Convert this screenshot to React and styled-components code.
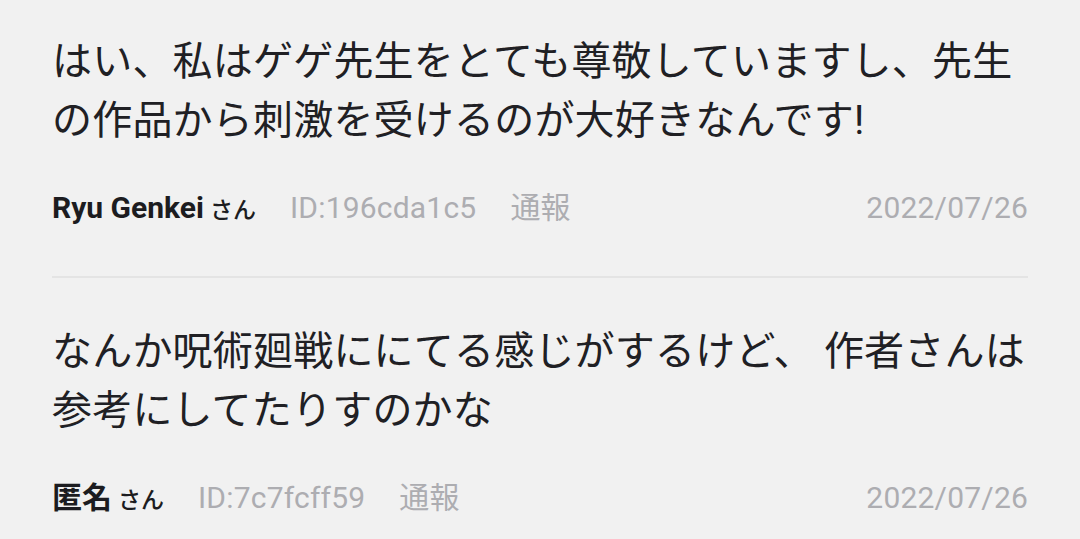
import React from "react";
import styled, { createGlobalStyle } from "styled-components";

const GlobalStyle = createGlobalStyle`
  html, body {
    margin: 0;
    padding: 0;
    background: #f1f1f1;
  }
  body {
    font-family: Roboto, "Noto Sans CJK JP", sans-serif;
    -webkit-font-smoothing: antialiased;
  }
`;

const Page = styled.div`
  width: 1080px;
  height: 539px;
  padding: 0 52px;
  box-sizing: border-box;
  background: #f1f1f1;
  overflow: hidden;
`;

// ========== コメント ==========

const CommentItem = styled.section`
  padding: 44px 0 50px;
  border-bottom: 2px solid #e4e4e4;

  &:first-child {
    padding-top: 32px;
  }
  &:last-child {
    border-bottom: 0;
    padding-bottom: 0;
  }
`;

const Body = styled.p`
  margin: 0;
  font-size: 40px;
  line-height: 59px;
  color: #202024;
  letter-spacing: 0.2px;
`;

const Meta = styled.div`
  display: flex;
  align-items: baseline;
  gap: 34px;
  margin-top: 40px;
  height: 36px;
  font-size: 30px;
  line-height: 36px;
  letter-spacing: 0.2px;
  color: #adadb1;
`;

const Author = styled.span`
  font-weight: 700;
  color: #1c1c20;
  letter-spacing: 0;
`;

const Honorific = styled.span`
  margin-left: 6px;
  font-size: 23px;
  font-weight: 500;
`;

const Report = styled.span`
  cursor: pointer;
`;

const DateText = styled.span`
  margin-left: auto;
`;

const comments = [
  {
    id: "196cda1c5",
    author: "Ryu Genkei",
    body: "はい、私はゲゲ先生をとても尊敬していますし、先生の作品から刺激を受けるのが大好きなんです!",
    date: "2022/07/26",
  },
  {
    id: "7c7fcff59",
    author: "匿名",
    body: "なんか呪術廻戦ににてる感じがするけど、 作者さんは参考にしてたりすのかな",
    date: "2022/07/26",
  },
];

function Comment({ data }) {
  return (
    <CommentItem>
      <Body>{data.body}</Body>
      <Meta>
        <Author>
          {data.author}
          <Honorific>さん</Honorific>
        </Author>
        <span>ID:{data.id}</span>
        <Report>通報</Report>
        <DateText>{data.date}</DateText>
      </Meta>
    </CommentItem>
  );
}

export default function App() {
  return (
    <>
      <GlobalStyle />
      <Page>
        {comments.map((c) => (
          <Comment key={c.id} data={c} />
        ))}
      </Page>
    </>
  );
}
